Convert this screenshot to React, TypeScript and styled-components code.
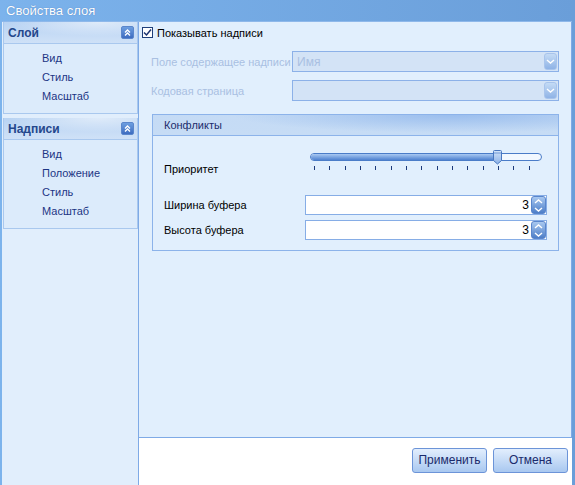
import React from 'react';
import styled, { createGlobalStyle } from 'styled-components';

const GlobalStyle = createGlobalStyle`
  html, body { margin: 0; padding: 0; }
  body { font-family: "Liberation Sans", Arial, sans-serif; font-size: 11px; }
`;

const Window = styled.div`
  width: 575px;
  height: 485px;
  display: flex;
  flex-direction: column;
  background: linear-gradient(to right, #7cb3ec, #6a9ed9);
  box-sizing: border-box;
  overflow: hidden;
`;

const TitleBar = styled.div`
  height: 21px;
  padding-left: 6px;
  display: flex;
  align-items: center;
  color: #fff;
  font-size: 13px;
  text-shadow: 0 0 1px rgba(40, 80, 150, 0.6);
`;

const Body = styled.div`
  flex: 1;
  display: flex;
  margin-left: 2px;
  margin-right: 3px;
  border-top: 1px solid #8eb8ea;
  min-height: 0;
`;

const Sidebar = styled.div`
  width: 136px;
  background: #e1eefc;
  border-right: 1px solid #7faae6;
  padding: 0 0 0 1px;
  display: flex;
  flex-direction: column;
  gap: 4px;
`;

const Group = styled.div`
  border: 1px solid #a9c8ee;
  border-top: none;
  background: #dcebfb;
`;

const GroupHeader = styled.div`
  height: 21px;
  display: flex;
  align-items: center;
  justify-content: space-between;
  padding: 0 3px 0 4px;
  background:
    radial-gradient(ellipse 90px 14px at 95px 0px, rgba(255,255,255,0.55), rgba(255,255,255,0) 100%),
    linear-gradient(to bottom, #b8d3f3, #cfe1f7);
  border-bottom: 1px solid #a9c8ee;
  color: #24478c;
  font-weight: bold;
  font-size: 12px;
`;

const CollapseBtn = styled.div`
  width: 13px;
  height: 13px;
  border-radius: 2px;
  background: linear-gradient(to bottom, #6d9ee0, #3d6cc0);
  border: 1px solid #5a86cc;
  box-sizing: border-box;
  display: flex;
  align-items: center;
  justify-content: center;
`;

const ItemList = styled.div`
  display: flex;
  flex-direction: column;
  padding: 5px 0 7px 38px;
`;

const Item = styled.div`
  height: 19px;
  line-height: 19px;
  color: #1c3584;
  font-size: 11px;
`;

const Main = styled.div`
  flex: 1;
  display: flex;
  flex-direction: column;
  background: #fff;
`;

const Panel = styled.div`
  height: 416px;
  background: #e1effd;
  border-bottom: 1px solid #7faae6;
  border-right: 1px solid #7faae6;
  padding: 4px 12px 0 3px;
  box-sizing: border-box;
`;

const CheckRow = styled.label`
  display: flex;
  align-items: center;
  gap: 4px;
  height: 13px;
  color: #000;
  font-size: 11px;
`;

const CheckBox = styled.span`
  width: 11px;
  height: 11px;
  background: #fff;
  border: 1px solid #1f3f7a;
  box-sizing: border-box;
  display: flex;
  align-items: center;
  justify-content: center;
`;

const FieldRow = styled.div`
  display: grid;
  grid-template-columns: 141px 1fr;
  align-items: center;
  padding-left: 9px;
  margin-top: 8px;
  &:first-of-type { margin-top: 12px; }
`;

const DisabledLabel = styled.span`
  color: #a9c0e2;
  font-size: 11px;
  white-space: nowrap;
`;

const Combo = styled.div`
  height: 21px;
  box-sizing: border-box;
  border: 1px solid #8cb1e8;
  background: #d3e3f6;
  display: flex;
  align-items: center;
  justify-content: space-between;
  padding: 0 1px 0 4px;
  color: #a9c0e2;
  font-size: 12px;
`;

const ComboBtn = styled.div`
  width: 13px;
  height: 17px;
  border-radius: 3px;
  background: linear-gradient(to bottom, #c4dbf5, #8fb3e6);
  border: 1px solid #a8c4ec;
  box-sizing: border-box;
  display: flex;
  align-items: center;
  justify-content: center;
`;

const Box = styled.div`
  margin: 13px 0 0 10px;
  border: 1px solid #8cb3ea;
  height: 137px;
  box-sizing: border-box;
`;

const BoxHeader = styled.div`
  height: 20px;
  display: flex;
  align-items: center;
  padding-left: 11px;
  border-bottom: 1px solid #8cb3ea;
  color: #1c2c6c;
  font-size: 11px;
  background:
    radial-gradient(ellipse 220px 18px at 300px 0px, rgba(140,180,235,0.75), rgba(140,180,235,0) 100%),
    linear-gradient(to bottom, #c5dbf5, #c6dcf5);
`;

const BoxBody = styled.div`
  padding: 0 11px;
`;

const SliderRow = styled.div`
  display: grid;
  grid-template-columns: 146px 232px;
  margin-top: 14px;
  height: 40px;
`;

const PlainLabel = styled.span`
  color: #000;
  font-size: 11px;
  white-space: nowrap;
`;

const SliderLabel = styled(PlainLabel)`
  align-self: end;
  padding-bottom: 15px;
`;

const SliderWrap = styled.div`
  position: relative;
  height: 30px;
`;

const Track = styled.div`
  position: absolute;
  left: 0;
  right: 0;
  top: 3px;
  height: 8px;
  border: 1px solid #4a7cc8;
  border-radius: 4px;
  background: #f2f8ff;
  box-sizing: border-box;
  overflow: hidden;
`;

const TrackFill = styled.div`
  height: 100%;
  background: linear-gradient(to bottom, #a9c9f2, #4f82d0);
`;

const Thumb = styled.div`
  position: absolute;
  top: 0;
  width: 9px;
  height: 15px;
`;

const Ticks = styled.div`
  position: absolute;
  top: 16px;
  left: 4px;
  right: 12px;
  display: flex;
  justify-content: space-between;
`;

const Tick = styled.span`
  width: 1px;
  height: 4px;
  background: #1c3a7a;
`;

const SpinRow = styled.div`
  display: grid;
  grid-template-columns: 141px 242px;
  align-items: center;
  margin-top: 5px;
  &:first-of-type { margin-top: 12px; }
`;

const SpinBox = styled.div`
  height: 20px;
  border: 1px solid #86ade6;
  background: #fff;
  box-sizing: border-box;
  display: flex;
  align-items: center;
  justify-content: flex-end;
  gap: 2px;
  font-size: 12px;
  color: #000;
`;

const SpinBtn = styled.div`
  width: 15px;
  height: 18px;
  border-radius: 3px;
  background: linear-gradient(to bottom, #a8c8f0, #4d7ec8);
  border: 1px solid #5a86cc;
  box-sizing: border-box;
  display: flex;
  flex-direction: column;
  align-items: center;
  justify-content: space-around;
`;

const Footer = styled.div`
  flex: 1;
  display: flex;
  justify-content: flex-end;
  align-items: center;
  gap: 6px;
  padding: 0 4px 3px 0;
`;

const Button = styled.button`
  width: 75px;
  height: 25px;
  border: 1px solid #6c94d8;
  border-radius: 3px;
  background: linear-gradient(to bottom, #e2eefd, #a9c8f0);
  color: #1a2a6c;
  font-family: "Liberation Sans", Arial, sans-serif;
  font-size: 12px;
  padding: 0;
`;

const Chevrons = () => (
  <svg width="7" height="7" viewBox="0 0 7 7">
    <path d="M1 3.5L3.5 1L6 3.5M1 6.5L3.5 4L6 6.5" stroke="#fff" strokeWidth="1.3" fill="none" />
  </svg>
);

const Arrow = ({ up, color }: { up: boolean; color: string }) => (
  <svg width="9" height="5" viewBox="0 0 9 5">
    <path d={up ? 'M1 4L4.5 1L8 4' : 'M1 1L4.5 4L8 1'} stroke={color} strokeWidth="1.4" fill="none" />
  </svg>
);

const SidebarGroup = ({ title, items }: { title: string; items: string[] }) => (
  <Group>
    <GroupHeader>
      <span>{title}</span>
      <CollapseBtn>
        <Chevrons />
      </CollapseBtn>
    </GroupHeader>
    <ItemList>
      {items.map((it) => (
        <Item key={it}>{it}</Item>
      ))}
    </ItemList>
  </Group>
);

const Spin = ({ label, value }: { label: string; value: number }) => (
  <SpinRow>
    <PlainLabel>{label}</PlainLabel>
    <SpinBox>
      <span>{value}</span>
      <SpinBtn>
        <Arrow up color="#fff" />
        <Arrow up={false} color="#fff" />
      </SpinBtn>
    </SpinBox>
  </SpinRow>
);

const App = () => {
  const ticks = Array.from({ length: 15 });
  const value = 0.81;
  return (
    <>
      <GlobalStyle />
      <Window>
        <TitleBar>Свойства слоя</TitleBar>
        <Body>
          <Sidebar>
            <SidebarGroup title="Слой" items={['Вид', 'Стиль', 'Масштаб']} />
            <SidebarGroup title="Надписи" items={['Вид', 'Положение', 'Стиль', 'Масштаб']} />
          </Sidebar>
          <Main>
            <Panel>
              <CheckRow>
                <CheckBox>
                  <svg width="9" height="9" viewBox="0 0 9 9">
                    <path d="M1 4.5L3.5 7L8 1.5" stroke="#1d3470" strokeWidth="1.5" fill="none" />
                  </svg>
                </CheckBox>
                Показывать надписи
              </CheckRow>
              <FieldRow>
                <DisabledLabel>Поле содержащее надписи</DisabledLabel>
                <Combo>
                  <span>Имя</span>
                  <ComboBtn>
                    <Arrow up={false} color="#fff" />
                  </ComboBtn>
                </Combo>
              </FieldRow>
              <FieldRow>
                <DisabledLabel>Кодовая страница</DisabledLabel>
                <Combo>
                  <span />
                  <ComboBtn>
                    <Arrow up={false} color="#fff" />
                  </ComboBtn>
                </Combo>
              </FieldRow>
              <Box>
                <BoxHeader>Конфликты</BoxHeader>
                <BoxBody>
                  <SliderRow>
                    <SliderLabel>Приоритет</SliderLabel>
                    <SliderWrap>
                      <Track>
                        <TrackFill style={{ width: `${value * 100}%` }} />
                      </Track>
                      <Thumb style={{ left: `calc(${value * 100}% - 5px)` }}>
                        <svg width="9" height="15" viewBox="0 0 9 15">
                          <defs>
                            <linearGradient id="tg" x1="0" y1="0" x2="0" y2="1">
                              <stop offset="0" stopColor="#d4e5fa" />
                              <stop offset="1" stopColor="#8ab0e6" />
                            </linearGradient>
                          </defs>
                          <path
                            d="M1.5 0.5H7.5Q8.5 0.5 8.5 1.5V10.5L4.5 14L0.5 10.5V1.5Q0.5 0.5 1.5 0.5Z"
                            fill="url(#tg)"
                            stroke="#4a78c0"
                          />
                          <path d="M1 3H8" stroke="#6f98d6" />
                        </svg>
                      </Thumb>
                      <Ticks>
                        {ticks.map((_, i) => (
                          <Tick key={i} />
                        ))}
                      </Ticks>
                    </SliderWrap>
                  </SliderRow>
                  <Spin label="Ширина буфера" value={3} />
                  <Spin label="Высота буфера" value={3} />
                </BoxBody>
              </Box>
            </Panel>
            <Footer>
              <Button>Применить</Button>
              <Button>Отмена</Button>
            </Footer>
          </Main>
        </Body>
      </Window>
    </>
  );
};

export default App;
